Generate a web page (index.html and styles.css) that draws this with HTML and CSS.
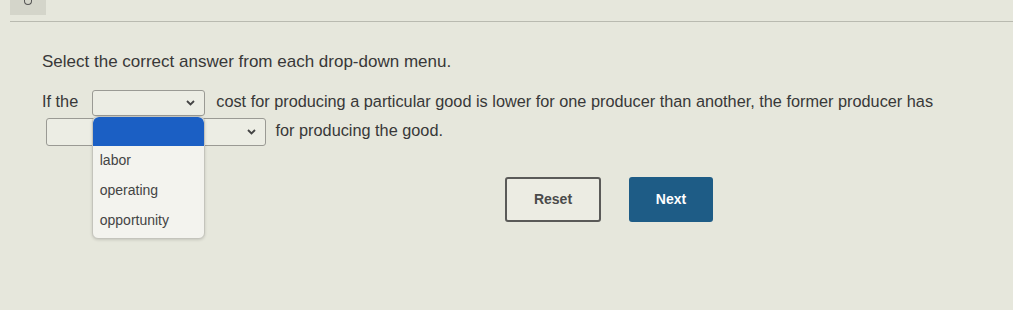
FILE: index.html
```html
<!DOCTYPE html>
<html>
<head>
    <title>Drop-down question</title>
    <link rel="stylesheet" href="styles.css">
</head>
<body>
    <div class="topbar">
        <div class="tab"><span class="dot"></span></div>
    </div>
    <div class="content">
        <p class="instruction">Select the correct answer from each drop-down menu.</p>
        <p class="question">
            If the
            <span class="dropdown short">
                <svg class="chevron" width="9" height="6" viewBox="0 0 9 6"><path d="M1 1 L4.5 4.5 L8 1" fill="none" stroke="#444" stroke-width="1.8"/></svg>
                <span class="menu">
                    <span class="option selected"></span>
                    <span class="option">labor</span>
                    <span class="option">operating</span>
                    <span class="option">opportunity</span>
                </span>
            </span>
            cost for producing a particular good is lower for one producer than another, the former producer has
            <br>
            <span class="dropdown long">
                <svg class="chevron" width="9" height="6" viewBox="0 0 9 6"><path d="M1 1 L4.5 4.5 L8 1" fill="none" stroke="#444" stroke-width="1.8"/></svg>
            </span>
            for producing the good.
        </p>
        <div class="buttons">
            <button class="btn reset">Reset</button>
            <button class="btn next">Next</button>
        </div>
    </div>
</body>
</html>
```

FILE: styles.css
```css
body {
    margin: 0;
    background-color: #e6e7dc;
    font-family: "Liberation Sans", Arial, sans-serif;
    color: #383838;
    width: 1013px;
    height: 310px;
    overflow: hidden;
}

.topbar {
    height: 21px;
    border-bottom: 1px solid #b9bab0;
    margin-left: 10px;
}

.tab {
    width: 36px;
    height: 15px;
    background-color: #d4d5ca;
    display: flex;
    justify-content: center;
}

.dot {
    width: 6px;
    height: 4px;
    border: 1px solid #555;
    border-top: none;
    border-radius: 0 0 4px 4px;
}

.content {
    padding-left: 42px;
}

.instruction {
    margin: 30px 0 0 0;
    font-size: 17px;
    line-height: 20px;
}

.question {
    margin: 15px 0 0 0;
    font-size: 16.3px;
    line-height: 29px;
}

.dropdown {
    position: relative;
    display: inline-block;
    vertical-align: middle;
    height: 24px;
    background-color: #ecede4;
    border: 1px solid #9a9a94;
    border-radius: 3px;
    box-sizing: border-box;
    margin: 0 5px;
}

.dropdown.short {
    width: 113px;
    height: 26px;
    margin: 0 7px 0 9px;
}

.dropdown.long {
    width: 220px;
    height: 28px;
    margin-left: 4px;
}

.chevron {
    position: absolute;
    right: 9px;
    top: 50%;
    margin-top: -3px;
}

.menu {
    position: absolute;
    top: 25px;
    left: -1px;
    width: 111px;
    background-color: #f3f3ee;
    border: 1px solid #c4c4bc;
    border-radius: 6px;
    box-shadow: 0 1px 3px rgba(0, 0, 0, 0.15);
    z-index: 2;
    overflow: hidden;
    display: flex;
    flex-direction: column;
    padding-bottom: 2px;
}

.option {
    height: 30px;
    line-height: 28px;
    padding-left: 7px;
    font-size: 14px;
    color: #444;
}

.option.selected {
    height: 29px;
    background-color: #1b5fc4;
    border-radius: 6px 6px 0 0;
}

.buttons {
    display: flex;
    gap: 28px;
    margin: 31px 0 0 463px;
}

.btn {
    height: 45px;
    font-family: "Liberation Sans", Arial, sans-serif;
    font-weight: bold;
    font-size: 14px;
    border-radius: 3px;
    box-sizing: border-box;
}

.reset {
    width: 96px;
    background-color: #ececE3;
    border: 2px solid #5a5a58;
    color: #4a4a4a;
}

.next {
    width: 84px;
    background-color: #1e5c86;
    border: none;
    color: #fff;
}
```
